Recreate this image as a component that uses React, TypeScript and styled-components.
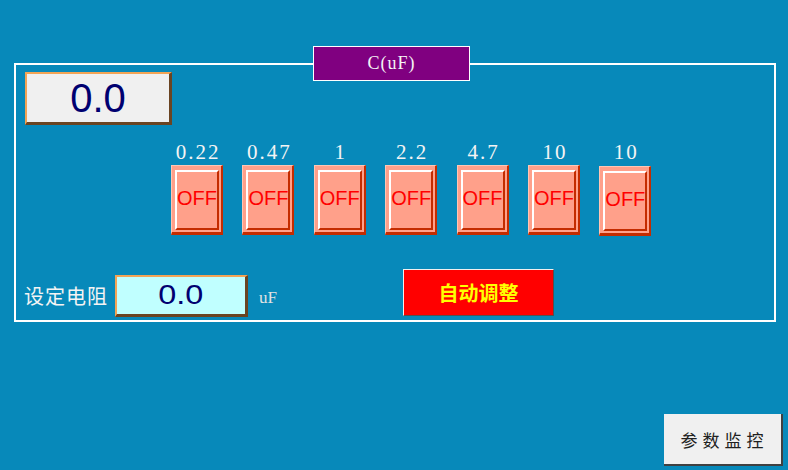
import React from 'react';
import styled, { createGlobalStyle } from 'styled-components';

const GlobalStyle = createGlobalStyle`
  html, body {
    margin: 0;
    padding: 0;
    background: #0789ba;
  }
  #root {
    width: 788px;
    height: 470px;
    overflow: hidden;
  }
`;

const Screen = styled.div`
  width: 788px;
  height: 470px;
  background: #0789ba;
  display: flex;
  flex-direction: column;
  box-sizing: border-box;
  padding-top: 63px;
`;

const Frame = styled.div`
  position: relative;
  box-sizing: border-box;
  margin-left: 14px;
  width: 762px;
  height: 259px;
  border: 2px solid #ffffff;
  display: flex;
  flex-direction: column;
`;

const FrameTitle = styled.div`
  position: absolute;
  left: 297px;
  top: -19px;
  box-sizing: border-box;
  width: 157px;
  height: 35px;
  background: #800080;
  border: 1px solid #ffffff;
  display: flex;
  align-items: center;
  justify-content: center;
  color: #f4f4f4;
  font-family: 'Liberation Serif', serif;
  font-size: 18px;
  letter-spacing: 1px;
`;

const ValueBox = styled.div<{ $bg: string; $w: number; $h: number }>`
  box-sizing: border-box;
  width: ${p => p.$w}px;
  height: ${p => p.$h}px;
  background: ${p => p.$bg};
  border-top: 2px solid #f3a455;
  border-left: 2px solid #f3a455;
  border-right: 3px solid #6a4422;
  border-bottom: 3px solid #6a4422;
  display: flex;
  align-items: center;
  justify-content: center;
  color: #000070;
  font-family: 'Liberation Sans', Arial, sans-serif;
`;

const TopDisplay = styled(ValueBox)`
  margin: 7px 0 0 9px;
  font-size: 40px;
`;

const SetDisplay = styled(ValueBox)`
  font-size: 27px;
`;

const WideDigits = styled.span`
  display: inline-block;
  transform: scaleX(1.2);
`;

const SwitchRow = styled.div`
  display: grid;
  grid-template-columns: repeat(7, 52px);
  column-gap: 19.4px;
  margin: 15px 0 0 155px;
`;

const SwitchCol = styled.div`
  display: flex;
  flex-direction: column;
  align-items: center;
`;

const SwitchLabel = styled.div`
  height: 24px;
  line-height: 24px;
  color: #f4f4f4;
  font-family: 'Liberation Serif', serif;
  font-size: 21px;
  letter-spacing: 2px;
  padding-left: 2px;
  white-space: nowrap;
`;

const SwitchButton = styled.div<{ $drop?: number }>`
  box-sizing: border-box;
  width: 52px;
  height: 70px;
  margin-top: ${p => 1 + (p.$drop || 0)}px;
  background: #ffa08a;
  border-top: 1px solid #ffc6b4;
  border-left: 1px solid #ffc6b4;
  border-right: 2px solid #c42c00;
  border-bottom: 3px solid #c42c00;
  padding: 4px 2px 2px 3px;
  display: flex;
`;

const SwitchFace = styled.div`
  flex: 1;
  box-sizing: border-box;
  border-top: 2px solid #ffffff;
  border-left: 2px solid #ffffff;
  border-right: 2px solid #c42c00;
  border-bottom: 2px solid #c42c00;
  display: flex;
  align-items: center;
  justify-content: center;
  padding-bottom: 3px;
  color: #ff0000;
  font-family: 'Liberation Sans', Arial, sans-serif;
  font-size: 20px;
`;

const BottomRow = styled.div`
  display: flex;
  align-items: flex-end;
  margin: 33px 0 0 8px;
  height: 48px;
`;

const RowLabel = styled.div`
  color: #f4f4f4;
  font-family: 'Noto Sans CJK SC', sans-serif;
  font-size: 20px;
  letter-spacing: 1px;
  line-height: 26px;
  margin: 0 7px 8px 0;
`;

const Unit = styled.div`
  color: #e2e2e2;
  font-family: 'Liberation Serif', serif;
  font-size: 17px;
  line-height: 20px;
  margin: 0 0 9px 11px;
`;

const AutoButton = styled.button`
  box-sizing: border-box;
  width: 151px;
  height: 47px;
  margin: 0 0 1px 126px;
  padding: 0;
  background: #ff0000;
  border-top: 1px solid #f0f0f0;
  border-left: 1px solid #f0f0f0;
  border-right: 1px solid #505050;
  border-bottom: 1px solid #505050;
  color: #ffff00;
  font-family: 'Noto Sans CJK SC', sans-serif;
  font-weight: 700;
  font-size: 20px;
`;

const Footer = styled.div`
  display: flex;
  justify-content: flex-end;
  margin-top: 92px;
  padding-right: 5px;
`;

const MonitorButton = styled.button`
  box-sizing: border-box;
  width: 119px;
  height: 52px;
  padding: 0 0 0 4px;
  background: #f0f0f0;
  border: none;
  border-right: 2px solid #404040;
  border-bottom: 2px solid #404040;
  color: #202020;
  font-family: 'Noto Sans CJK SC', sans-serif;
  font-size: 17px;
  letter-spacing: 5px;
`;

const switches = [
  { label: '0.22' },
  { label: '0.47' },
  { label: '1' },
  { label: '2.2' },
  { label: '4.7' },
  { label: '10' },
  { label: '10', drop: 1 },
];

export default function App() {
  return (
    <>
      <GlobalStyle />
      <Screen>
        <Frame>
          <FrameTitle>C(uF)</FrameTitle>
          <TopDisplay $bg="#f0f0f0" $w={147} $h={53}>0.0</TopDisplay>

          <SwitchRow>
            {switches.map((s, i) => (
              <SwitchCol key={i}>
                <SwitchLabel>{s.label}</SwitchLabel>
                <SwitchButton $drop={s.drop}>
                  <SwitchFace>OFF</SwitchFace>
                </SwitchButton>
              </SwitchCol>
            ))}
          </SwitchRow>

          <BottomRow>
            <RowLabel>设定电阻</RowLabel>
            <SetDisplay $bg="#c0ffff" $w={133} $h={42}>
              <WideDigits>0.0</WideDigits>
            </SetDisplay>
            <Unit>uF</Unit>
            <AutoButton>自动调整</AutoButton>
          </BottomRow>
        </Frame>

        <Footer>
          <MonitorButton>参数监控</MonitorButton>
        </Footer>
      </Screen>
    </>
  );
}
